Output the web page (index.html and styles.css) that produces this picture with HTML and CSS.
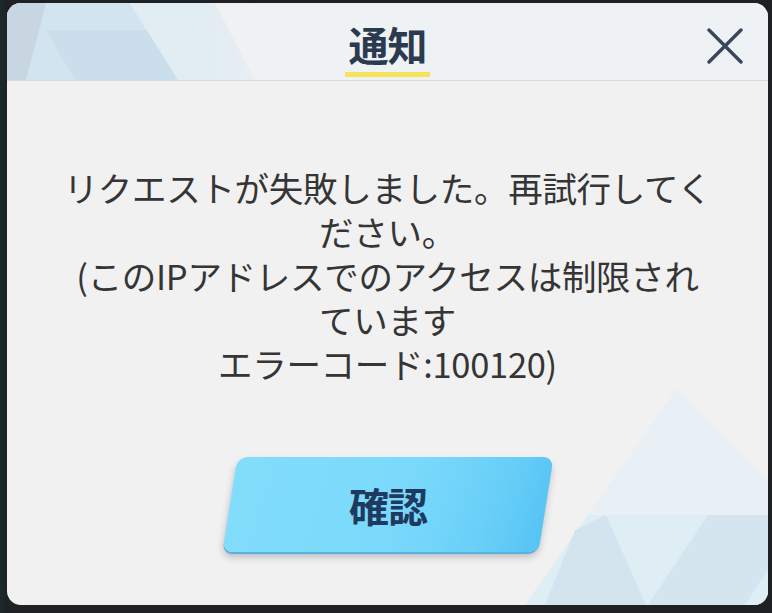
FILE: index.html
```html
<!DOCTYPE html>
<html lang="ja">
<head>
<meta charset="utf-8">
<title>通知</title>
<link rel="stylesheet" href="styles.css">
</head>
<body>
<div class="dialog">
  <svg class="deco" width="761" height="602" viewBox="7 3 761 602" aria-hidden="true">
    <polygon points="7,3 130,3 178,80 7,80" fill="#d2e4ef"/>
    <polygon points="7,3 46,3 26,80 7,80" fill="#c8d6e2"/>
    <polygon points="46,30 175,30 178,80 75,80" fill="#c6dae7" opacity="0.6"/>
    <polygon points="130,3 215,3 255,80 178,80" fill="#e2ecf3"/>
    <polygon points="677,388 768,480 768,605 525,605" fill="#e8f0f6"/>
    <polygon points="588,515 768,515 768,605 525,605" fill="#dfedf5"/>
    <polygon points="575,530 606,515 646,605 545,605" fill="#d3e4ee"/>
    <polygon points="708,515 768,515 768,570 745,605 648,605" fill="#d4e5ef"/>
  </svg>
  <header class="head">
    <div class="title-wrap">
      <h1 class="title">通知</h1>
      <div class="title-bar"></div>
    </div>
    <button class="close" aria-label="閉じる">
      <svg width="36" height="36" viewBox="0 0 36 36">
        <path d="M2 2 L34 34 M34 2 L2 34" stroke="#3a4659" stroke-width="3.4" stroke-linecap="round" fill="none"/>
      </svg>
    </button>
  </header>
  <main class="body">
    <div class="msg">
      <div class="line">リクエストが失敗しました。再試行してく</div>
      <div class="line">ださい。</div>
      <div class="line">(このIPアドレスでのアクセスは制限され</div>
      <div class="line">ています</div>
      <div class="line">エラーコード:100120)</div>
    </div>
    <button class="confirm"><span class="confirm-label">確認</span></button>
  </main>
</div>
</body>
</html>
```

FILE: styles.css
```css
* { box-sizing: border-box; }

html, body {
  margin: 0;
  padding: 0;
}

body {
  width: 772px;
  height: 613px;
  background: linear-gradient(90deg, #1b2a2c 0px, #1e2224 7px, #1f2022 100%);
  padding: 3px 4px 8px 7px;
  font-family: "Noto Sans CJK JP", "Noto Sans", sans-serif;
  overflow: hidden;
}

.dialog {
  position: relative;
  width: 761px;
  height: 602px;
  border-radius: 14px;
  background: #f1f1f1;
  overflow: hidden;
  display: flex;
  flex-direction: column;
}

.deco {
  position: absolute;
  left: 0;
  top: 0;
  z-index: 0;
}

.head {
  position: relative;
  z-index: 1;
  height: 78px;
  padding-top: 19px;
  border-bottom: 1px solid #d8dbde;
  background: linear-gradient(90deg, rgba(238,242,245,0) 0px, rgba(238,242,245,0) 200px, #eef2f5 300px);
  display: grid;
  grid-template-columns: 1fr auto 1fr;
  align-items: start;
}

.title-wrap {
  grid-column: 2;
  display: flex;
  flex-direction: column;
  align-items: center;
}

.title {
  margin: 0;
  font-size: 40px;
  line-height: 44px;
  font-weight: 700;
  color: #2b3a4e;
  letter-spacing: -1px;
}

.title-bar {
  width: 85px;
  height: 5px;
  margin-top: 6px;
  background: #f7e359;
}

.close {
  grid-column: 3;
  justify-self: end;
  margin: 6px 25px 0 0;
  padding: 0;
  border: 0;
  background: none;
  width: 36px;
  height: 36px;
}

.close svg { display: block; }

.body {
  position: relative;
  z-index: 1;
  flex: 1;
  display: flex;
  flex-direction: column;
  align-items: center;
  padding-top: 84px;
}

.msg {
  display: flex;
  flex-direction: column;
  align-items: center;
  font-size: 34.5px;
  line-height: 44px;
  font-weight: 400;
  color: #353535;
  letter-spacing: -0.3px;
}

.line {
  white-space: nowrap;
  height: 44px;
}

.confirm {
  margin-top: 72px;
  width: 316px;
  height: 95px;
  border: 0;
  padding: 0;
  border-radius: 10px;
  transform: skewX(-9deg);
  background: linear-gradient(100deg, #82ddfa 0%, #7ad9fb 55%, #6ad0f8 80%, #56c3f5 100%);
  box-shadow: 0 2px 0 #58b2dd, 0 5px 7px rgba(60, 70, 90, 0.3);
  display: flex;
  align-items: center;
  justify-content: center;
  font-family: inherit;
}

.confirm-label {
  display: block;
  transform: skewX(9deg);
  font-size: 40px;
  line-height: 44px;
  font-weight: 700;
  color: #1f3a60;
  letter-spacing: -1px;
}
```
